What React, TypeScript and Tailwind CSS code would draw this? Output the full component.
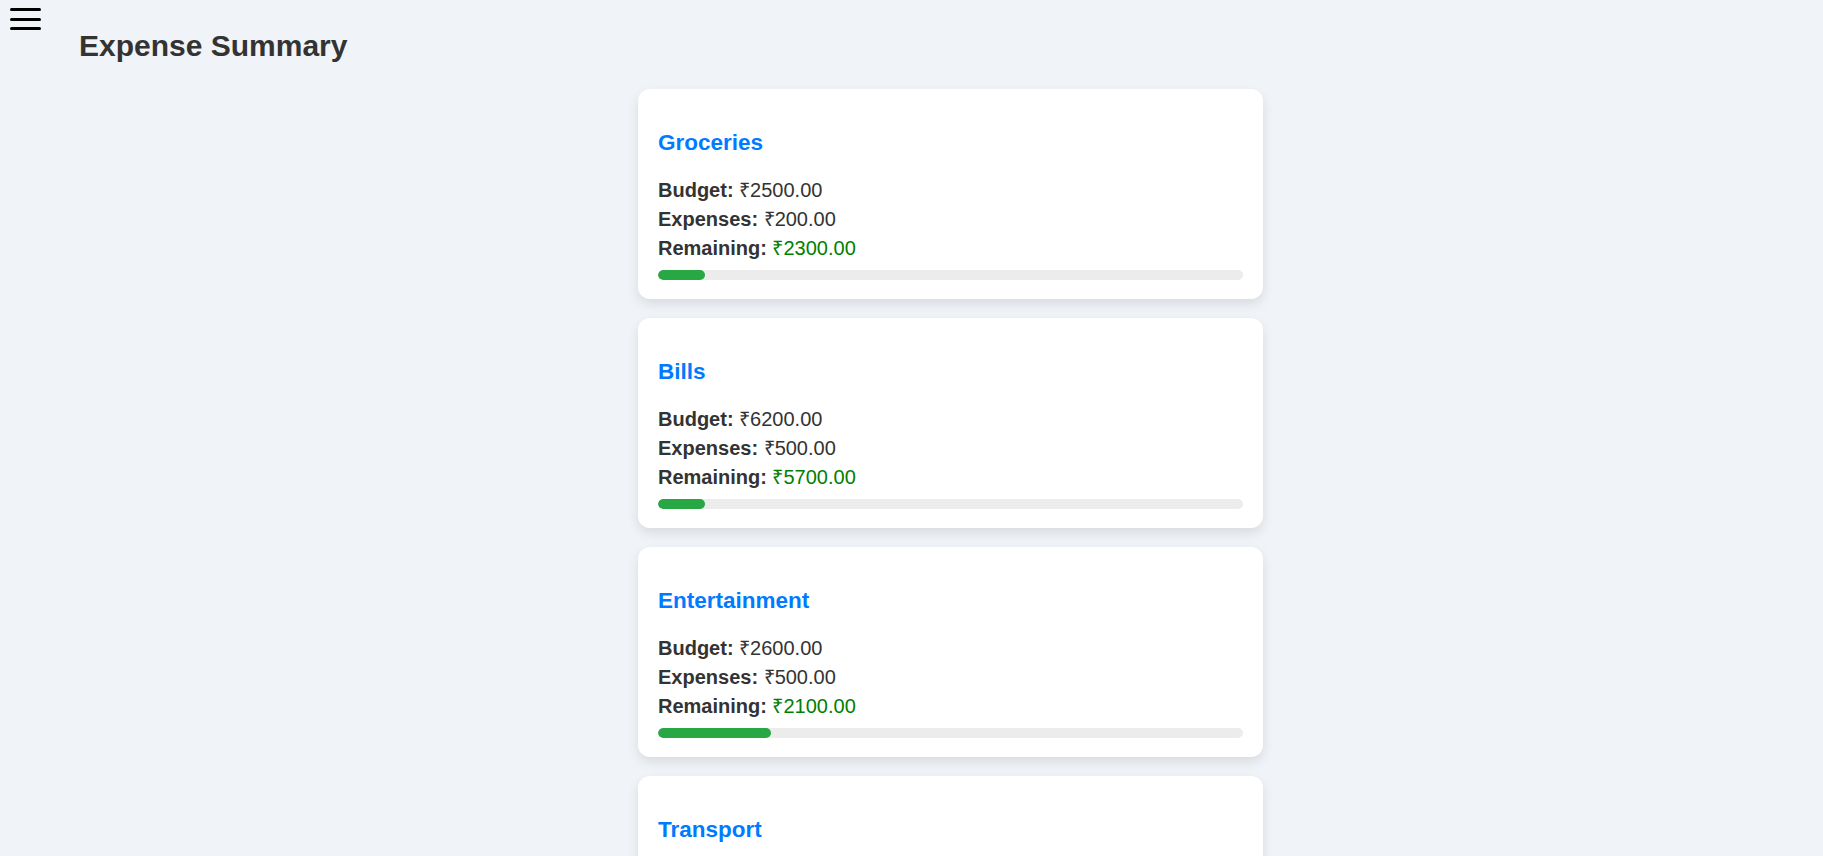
import React from "react";

const categories = [
  { name: "Groceries", budget: 2500, expenses: 200 },
  { name: "Bills", budget: 6200, expenses: 500 },
  { name: "Entertainment", budget: 2600, expenses: 500 },
  { name: "Transport", budget: 1500, expenses: 300 },
];

const CategoryCard = ({ name, budget, expenses }: { name: string; budget: number; expenses: number }) => {
  const remaining = budget - expenses;
  const percent = Math.min((expenses / budget) * 100, 100);
  return (
    <div className="w-[625px] shrink-0 bg-white rounded-[12px] shadow-[0_5px_12px_rgba(0,0,0,0.1)] px-5 pt-[41px] pb-[19px]">
      <h3 className="text-[22.5px] leading-[26px] font-bold text-[#007bff] mb-5">{name}</h3>
      <div className="text-[20px] leading-[29px] text-[#333]">
        <p>
          <span className="font-bold">Budget:</span> ₹{budget.toFixed(2)}
        </p>
        <p>
          <span className="font-bold">Expenses:</span> ₹{expenses.toFixed(2)}
        </p>
        <p>
          <span className="font-bold">Remaining:</span>{" "}
          <span className="text-[#008000]">₹{remaining.toFixed(2)}</span>
        </p>
      </div>
      <div className="mt-[7px] h-[10px] w-full rounded-full bg-[#ececec] overflow-hidden">
        <div className="h-full rounded-full bg-[#28a745]" style={{ width: `${percent}%` }}></div>
      </div>
    </div>
  );
};

const App = () => {
  return (
    <div className="min-h-screen w-full bg-[#f0f3f7] relative font-['Liberation_Sans',Arial,sans-serif] overflow-hidden h-[856px]">
      {/* menu toggle */}
      <button className="absolute left-[10px] top-[8px] w-[31px] flex flex-col gap-[6.5px]">
        <span className="block h-[3px] w-full rounded-full bg-black"></span>
        <span className="block h-[3px] w-full rounded-full bg-black"></span>
        <span className="block h-[3px] w-full rounded-full bg-black"></span>
      </button>

      <h2 className="ml-[79px] pt-[28px] text-[30px] leading-[36px] font-bold text-[#333]">Expense Summary</h2>

      <div className="pl-[78px] mt-[25px] flex flex-col items-center gap-[19px]">
        {categories.map((c) => (
          <CategoryCard key={c.name} {...c} />
        ))}
      </div>
    </div>
  );
};

export default App;
